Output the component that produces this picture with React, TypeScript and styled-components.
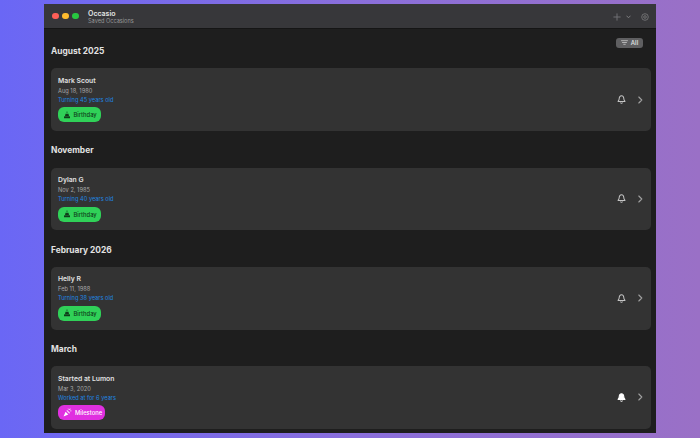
import React from "react";
import styled, { createGlobalStyle } from "styled-components";

const Global = createGlobalStyle`
  html, body { margin: 0; padding: 0; height: 438px; overflow: hidden; }
  body { font-family: Inter, "Liberation Sans", sans-serif; }
`;

const Desktop = styled.div`
  width: 700px;
  height: 438px;
  box-sizing: border-box;
  padding: 4px 44px 5px;
  background: linear-gradient(90deg, #6a67f5 0%, #8a6fdc 50%, #9a70c6 100%);
`;

const Window = styled.div`
  height: 429px;
  display: flex;
  flex-direction: column;
  background: #1e1e1e;
  overflow: hidden;
`;

const TitleBar = styled.div`
  height: 25px;
  flex: none;
  box-sizing: border-box;
  display: flex;
  align-items: center;
  padding: 0 7px 0 8px;
  background: #37373a;
  border-bottom: 1px solid #151515;
`;

const Lights = styled.div`
  display: flex;
  gap: 3.5px;
  margin-right: 9.5px;
`;

const Light = styled.span<{ $c: string }>`
  width: 6.5px;
  height: 6.5px;
  border-radius: 50%;
  background: ${(p) => p.$c};
`;

const TitleBlock = styled.div`
  display: flex;
  flex-direction: column;
  flex: 1;
  margin-top: 1px;
`;

const AppName = styled.div`
  font-size: 7px;
  line-height: 9px;
  font-weight: 600;
  color: #e4e4e4;
`;

const AppSub = styled.div`
  font-size: 5.6px;
  line-height: 7px;
  color: #969696;
`;

const ToolIcons = styled.div`
  display: flex;
  align-items: center;
  margin-top: 1px;
`;

const Content = styled.div`
  flex: 1;
  padding: 0 5px 0 7px;
  position: relative;
  display: flex;
  flex-direction: column;
  gap: 13.3px;
`;

const Filter = styled.div`
  position: absolute;
  top: 8.5px;
  right: 13px;
  width: 27px;
  height: 10px;
  border-radius: 3px;
  background: #5f5f61;
  display: flex;
  align-items: center;
  justify-content: center;
  gap: 3px;
  font-size: 6px;
  font-weight: 500;
  color: #e6e6e6;
`;

const Heading = styled.div`
  font-size: 8.4px;
  line-height: 12px;
  font-weight: 700;
  color: #e2e2e2;
  margin-bottom: 11.3px;
`;

const Section = styled.section`
  &:first-of-type { margin-top: 16px; }
`;

const Card = styled.div`
  height: 62.7px;
  box-sizing: border-box;
  background: #333333;
  border-radius: 5px;
  padding: 7.5px 7px;
  display: flex;
  align-items: center;
`;

const Info = styled.div`
  flex: 1;
  align-self: flex-start;
`;

const Name = styled.div`
  font-size: 6.8px;
  line-height: 9px;
  font-weight: 600;
  color: #e2e2e2;
`;

const DateLine = styled.div`
  font-size: 5.7px;
  line-height: 9px;
  margin-top: 1px;
  color: #a8a8a8;
`;

const Note = styled.div`
  font-size: 5.7px;
  line-height: 9px;
  color: #1f86e0;
`;

const Badge = styled.div<{ $bg: string; $fg: string; $w: number; $gap: number }>`
  margin-top: 3.5px;
  width: ${(p) => p.$w}px;
  height: 15px;
  box-sizing: border-box;
  padding-left: 5px;
  border-radius: 6px;
  background: ${(p) => p.$bg};
  color: ${(p) => p.$fg};
  display: flex;
  align-items: center;
  gap: ${(p) => p.$gap}px;
  font-size: 5.8px;
  font-weight: 500;
`;

const Actions = styled.div`
  display: flex;
  align-items: center;
  gap: 11px;
  padding-right: 1px;
`;

const BellIcon = ({ filled }: { filled?: boolean }) => (
  <svg width="9" height="9" viewBox="0 0 16 16" fill={filled ? "#fff" : "none"} stroke={filled ? "#fff" : "#c4c4c4"} strokeWidth="1.8" strokeLinejoin="round" strokeLinecap="round">
    <path d="M8 1.5c-2.6 0-4 2-4 4.4 0 3-1.2 4.4-2.2 5.6h12.4C13.2 10.3 12 8.9 12 5.900 12 3.500 10.600 1.500 8 1.500Z" />
    <path d="M6.5 14c.4.8 2.6.8 3 0" fill="none" />
  </svg>
);

const Chevron = () => (
  <svg width="6" height="8" viewBox="0 0 6 8" fill="none" stroke="#a0a0a0" strokeWidth="1.1" strokeLinecap="round" strokeLinejoin="round">
    <path d="M1.8 1 4.8 4 1.8 7" />
  </svg>
);

const CakeIcon = () => (
  <svg width="8" height="8" viewBox="0 0 16 16" fill="#0f3d1a">
    <rect x="7.3" y="1" width="1.4" height="3" />
    <path d="M5 5.5h6l1 4.5H4Z" />
    <rect x="2" y="10.5" width="12" height="4" rx="0.5" />
  </svg>
);

const PartyIcon = () => (
  <svg width="9" height="9" viewBox="0 0 16 16" fill="#fff">
    <path d="M1 15 4.500 6.500 9.500 11.500Z" />
    <path d="M6 5 7.500 3.500 12.500 8.500 11 10Z" opacity="0.8" />
    <circle cx="11" cy="2.5" r="1" />
    <circle cx="14" cy="5" r="1" />
    <circle cx="9" cy="1.5" r="0.7" />
    <circle cx="13.5" cy="1.8" r="0.8" />
  </svg>
);

const PlusIcon = () => (
  <svg width="8" height="8" viewBox="0 0 8 8" stroke="#6f6f72" strokeWidth="1" strokeLinecap="round">
    <path d="M4 .8v6.4M.8 4h6.4" />
  </svg>
);

const SmallChevron = styled.svg`
  margin: 0 10px 0 5px;
`;

const GaugeIcon = () => (
  <svg width="8" height="8" viewBox="0 0 8 8" fill="none" stroke="#7c7c7e" strokeWidth="0.8">
    <circle cx="4" cy="4" r="3.3" />
    <circle cx="4" cy="4" r="1.3" />
  </svg>
);

const FilterIcon = () => (
  <svg width="7" height="5" viewBox="0 0 7 5" stroke="#c8c8c8" strokeWidth="0.8" strokeLinecap="round">
    <path d="M.5.7h6M1.5 2.5h4M2.7 4.3h1.6" />
  </svg>
);

type Item = {
  heading: string;
  name: string;
  date: string;
  note: string;
  kind: "Birthday" | "Milestone";
};

const items: Item[] = [
  { heading: "August 2025", name: "Mark Scout", date: "Aug 18, 1980", note: "Turning 45 years old", kind: "Birthday" },
  { heading: "November", name: "Dylan G", date: "Nov 2, 1985", note: "Turning 40 years old", kind: "Birthday" },
  { heading: "February 2026", name: "Helly R", date: "Feb 11, 1988", note: "Turning 38 years old", kind: "Birthday" },
  { heading: "March", name: "Started at Lumon", date: "Mar 3, 2020", note: "Worked at for 6 years", kind: "Milestone" },
];

export default function App() {
  return (
    <Desktop>
      <Global />
      <Window>
        <TitleBar>
          <Lights>
            <Light $c="#ff5f57" />
            <Light $c="#febc2e" />
            <Light $c="#28c840" />
          </Lights>
          <TitleBlock>
            <AppName>Occasio</AppName>
            <AppSub>Saved Occasions</AppSub>
          </TitleBlock>
          <ToolIcons>
            <PlusIcon />
            <SmallChevron width="5" height="4" viewBox="0 0 5 4" fill="none" stroke="#858587" strokeWidth="0.9" strokeLinecap="round" strokeLinejoin="round">
              <path d="M.8 1 2.5 2.8 4.2 1" />
            </SmallChevron>
            <GaugeIcon />
          </ToolIcons>
        </TitleBar>
        <Content>
          <Filter>
            <FilterIcon />
            All
          </Filter>
          {items.map((it) => (
            <Section key={it.heading}>
              <Heading>{it.heading}</Heading>
              <Card>
                <Info>
                  <Name>{it.name}</Name>
                  <DateLine>{it.date}</DateLine>
                  <Note>{it.note}</Note>
                  {it.kind === "Birthday" ? (
                    <Badge $bg="#30d158" $fg="#0f3d1a" $w={43} $gap={2.5}>
                      <CakeIcon />
                      {it.kind}
                    </Badge>
                  ) : (
                    <Badge $bg="#e030e0" $fg="#ffffff" $w={47} $gap={3}>
                      <PartyIcon />
                      {it.kind}
                    </Badge>
                  )}
                </Info>
                <Actions>
                  <BellIcon filled={it.kind === "Milestone"} />
                  <Chevron />
                </Actions>
              </Card>
            </Section>
          ))}
        </Content>
      </Window>
    </Desktop>
  );
}
